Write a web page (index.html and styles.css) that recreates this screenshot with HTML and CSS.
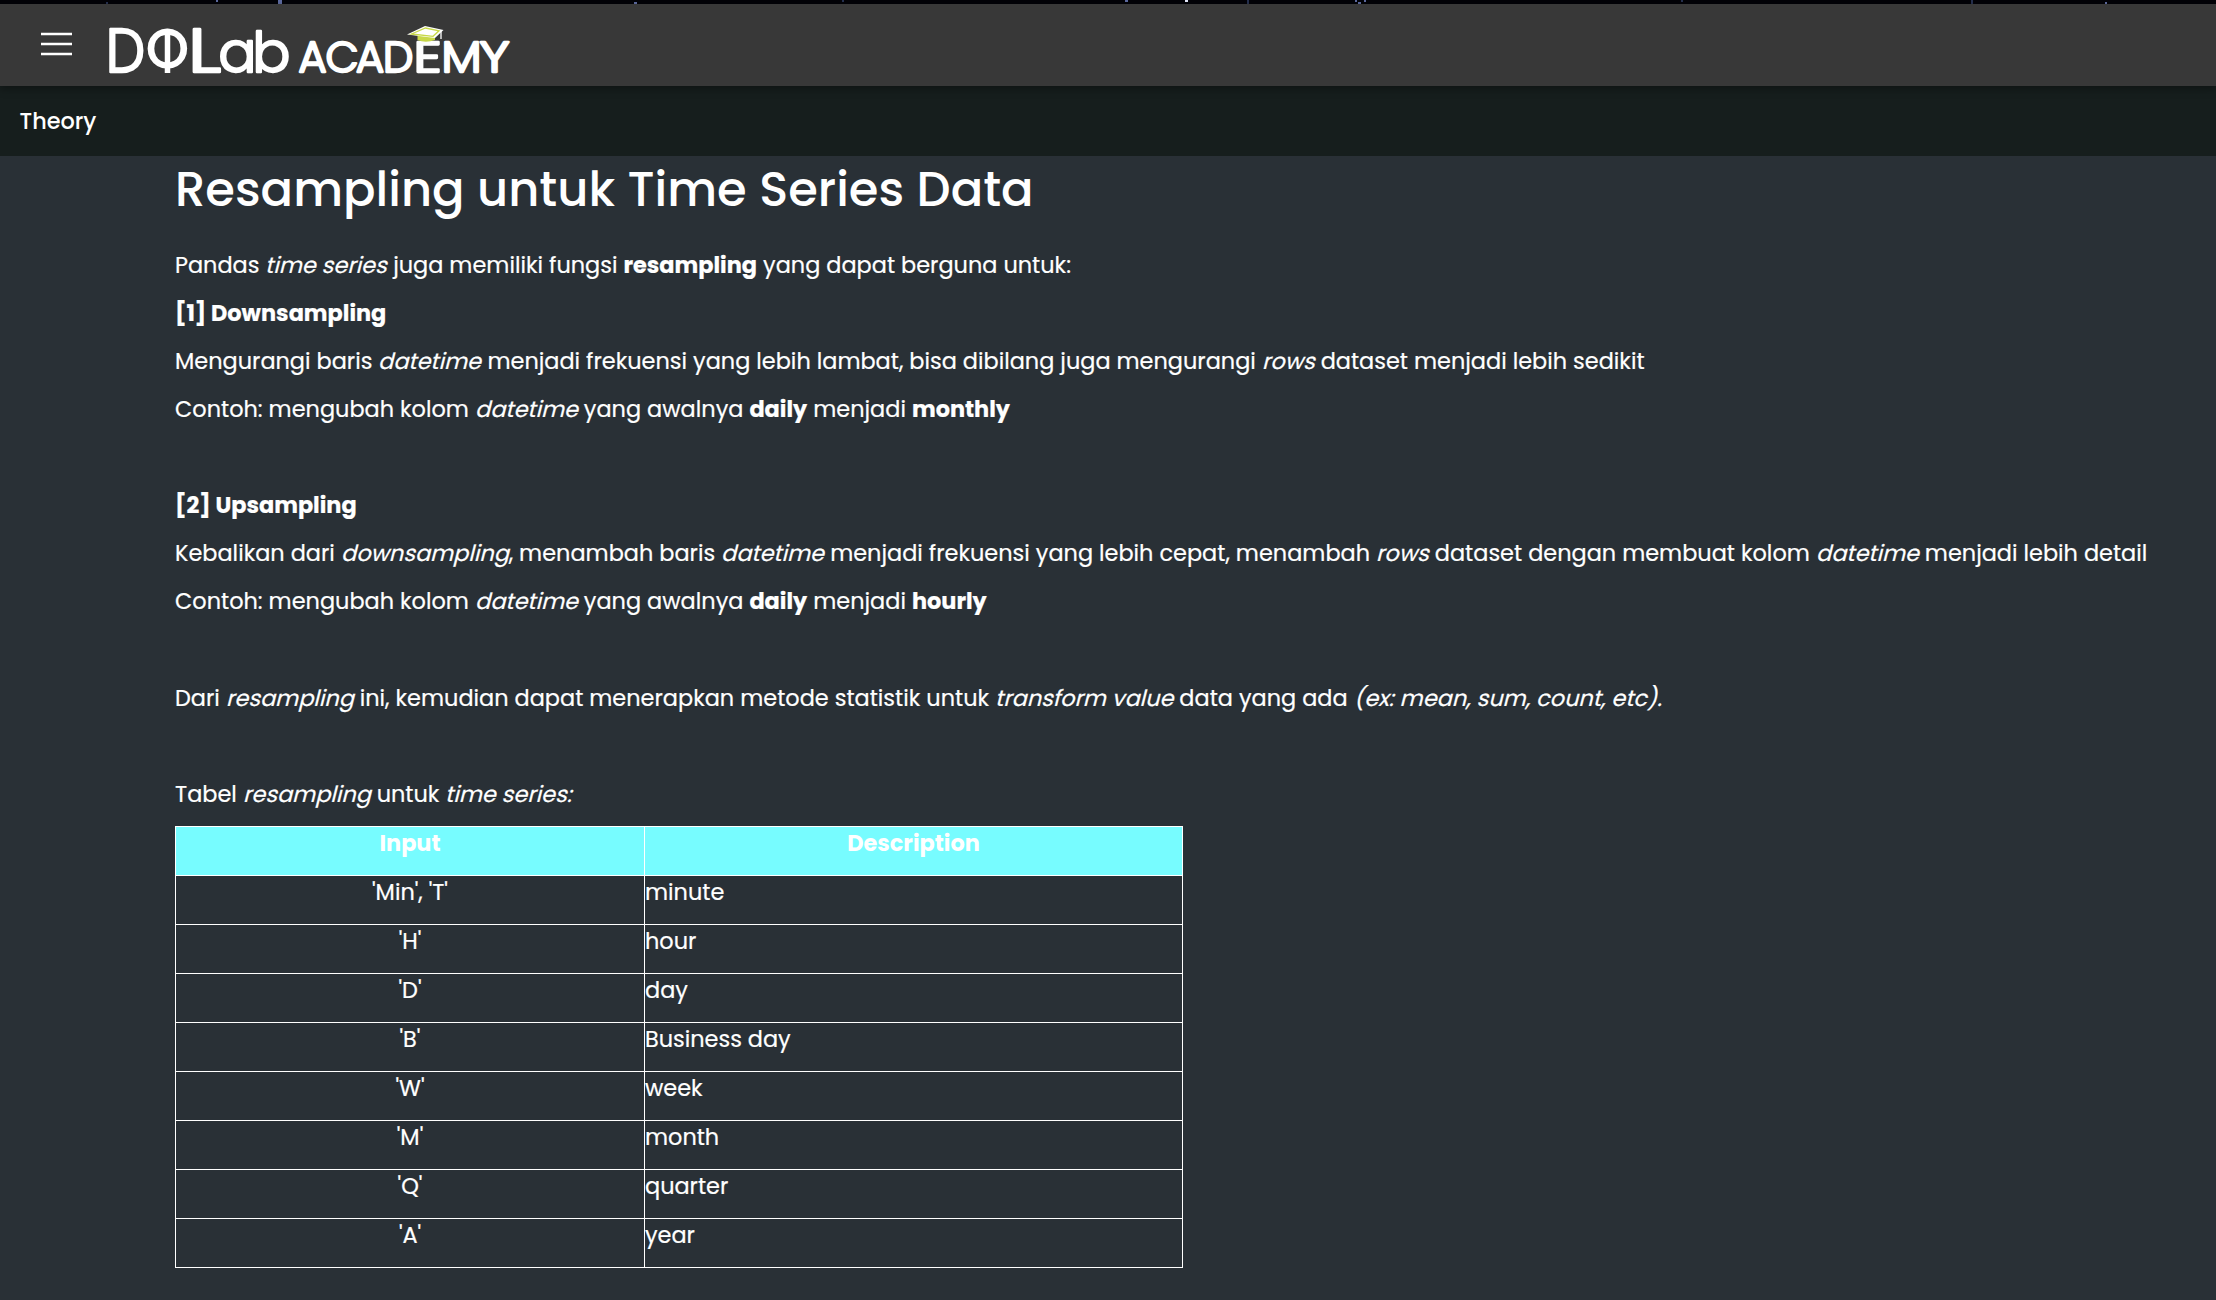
FILE: index.html
```html
<!DOCTYPE html>
<html lang="id">
<head>
<meta charset="utf-8">
<title>DQLab Academy</title>
<link rel="stylesheet" href="styles.css">
</head>
<body>
<div class="backdrop">
<svg width="2216" height="4" viewBox="0 0 2216 4"><path class="star" d="M278 0h4v4h-4zM634 2h3v2h-3zM216 0h2v2h-2zM1125 0h3v2h-3zM1355 0h2v2h-2zM1358 2h3v2h-3zM1364 0h2v2h-2zM2105 2h2v2h-2z"/><path class="star-bright" d="M1185 0h3v2h-3z"/><path class="star-dim" d="M106 2h2v2h-2zM842 0h2v2h-2zM1247 0h2v4h-2zM1681 0h2v2h-2zM1971 0h2v4h-2z"/></svg>
</div>
<header class="topbar">
<svg class="menu" width="31" height="24" viewBox="0 0 31 24"><path d="M0 2h31M0 12h31M0 22h31"/></svg>
<svg class="logo" width="412" height="54" viewBox="101 24 412 54">
<g class="logo-big">
<text x="106" y="71.700" textLength="39" lengthAdjust="spacingAndGlyphs">D</text>
<text class="logo-ring" x="167.500" y="66.500" text-anchor="middle">O</text>
<text x="188" y="71.700" textLength="33" lengthAdjust="spacingAndGlyphs">L</text>
</g>
<text class="logo-lower" x="218.500 252.500" y="71.700">ab</text>
<path class="bar" d="M167.500 29v44"/>
<g class="logo-small">
<text x="298.500 325.500 356 383" y="71.700">ACAD</text>
<text x="413.500" y="71.700" textLength="28" lengthAdjust="spacingAndGlyphs">E</text>
<text x="441.500" y="71.700" textLength="40" lengthAdjust="spacingAndGlyphs">M</text>
<text x="479.500" y="71.700" textLength="30" lengthAdjust="spacingAndGlyphs">Y</text>
</g>
<path class="cap-base" d="M417.500 35v5q8 3.500 17.500 0v-5z"/>
<path class="cap-top" d="M407 34.500L425 26L443.500 30L435 38Z"/>
<path class="cap-line" d="M411.500 34L425.500 28L439 30.800L433 36.300Z"/>
<path class="tassel" d="M441 31v8"/>
</svg>
</header>
<nav class="subbar">Theory</nav>
<main class="content">
<h1>Resampling untuk Time Series Data</h1>
<p>Pandas <em>time series</em> juga memiliki fungsi <strong>resampling</strong> yang dapat berguna untuk:</p>
<p><strong>[1] Downsampling</strong></p>
<p>Mengurangi baris <em>datetime</em> menjadi frekuensi yang lebih lambat, bisa dibilang juga mengurangi <em>rows</em> dataset menjadi lebih sedikit</p>
<p>Contoh: mengubah kolom <em>datetime</em> yang awalnya <strong>daily</strong> menjadi <strong>monthly</strong></p>
<p></p>
<p><strong>[2] Upsampling</strong></p>
<p>Kebalikan dari <em>downsampling</em>, menambah baris <em>datetime</em> menjadi frekuensi yang lebih cepat, menambah <em>rows</em> dataset dengan membuat kolom <em>datetime</em> menjadi lebih detail</p>
<p>Contoh: mengubah kolom <em>datetime</em> yang awalnya <strong>daily</strong> menjadi <strong>hourly</strong></p>
<p class="tall"></p>
<p>Dari <em>resampling</em> ini, kemudian dapat menerapkan metode statistik untuk <em>transform value</em> data yang ada <em>(ex: mean, sum, count, etc).</em></p>
<p></p>
<p>Tabel <em>resampling</em> untuk <em>time series:</em></p>
<table>
<thead><tr><th>Input</th><th>Description</th></tr></thead>
<tbody>
<tr><td>'Min', 'T'</td><td>minute</td></tr>
<tr><td>'H'</td><td>hour</td></tr>
<tr><td>'D'</td><td>day</td></tr>
<tr><td>'B'</td><td>Business day</td></tr>
<tr><td>'W'</td><td>week</td></tr>
<tr><td>'M'</td><td>month</td></tr>
<tr><td>'Q'</td><td>quarter</td></tr>
<tr><td>'A'</td><td>year</td></tr>
</tbody>
</table>
</main>
</body>
</html>
```
FILE: styles.css
```css
* { box-sizing: border-box; }
body {
  margin: 0;
  height: 1300px;
  overflow: hidden;
  background: #293036;
  color: #fff;
  font-family: Poppins, Inter, sans-serif;
  font-size: 22.4px;
  line-height: 36px;
}
.backdrop { height: 4px; background: #020207; }
.backdrop svg { display: block; }
.star { fill: #5d6ba0; }
.star-bright { fill: #e8ecff; }
.star-dim { fill: #25304f; }
.topbar {
  position: relative;
  display: flex;
  align-items: flex-start;
  height: 82px;
  padding: 20px 0 0 41px;
  gap: 29px;
  background: #383838;
  box-shadow: 0 3px 8px rgba(0, 0, 0, .35);
}
.menu { margin-top: 8px; }
.menu path { stroke: #fff; stroke-width: 2.5; }
.logo { overflow: visible; }
.logo text { fill: #fff; stroke: #fff; stroke-linejoin: round; font-weight: 300; }
.logo-big { font-size: 61px; }
.logo-big text { stroke-width: 2.5; }
.logo-big .logo-ring { font-size: 53px; stroke-width: 2.8; }
.logo .logo-lower { font-size: 56px; stroke-width: 2.4; }
.logo-small { font-size: 43px; }
.logo-small text { stroke-width: 2.3; }
.bar { stroke: #fff; stroke-width: 5.5; }
.cap-base { fill: #c8d849; }
.cap-top { fill: #fff; }
.cap-line { fill: none; stroke: #c8d849; stroke-width: 1.3; }
.tassel { stroke: #fff; stroke-width: 1.3; }
.subbar {
  height: 70px;
  padding: 17px 19.5px;
  background: #161e1d;
  font-weight: 500;
}
.content { padding: 1px 0 0 175px; }
h1 { margin: 0; height: 90px; font-size: 48px; line-height: 65px; font-weight: 500; white-space: nowrap; }
p { margin: 0; height: 48px; white-space: nowrap; letter-spacing: .012px; }
p, td { -webkit-text-stroke: .2px #fff; }
.tall { height: 49px; }
em {
  display: inline-block;
  font-style: normal;
  transform: skewX(-14deg);
  transform-origin: 0 72%;
}
strong, th { font-weight: 700; }
table { width: 1008px; margin-top: 2px; border-collapse: collapse; table-layout: fixed; line-height: 32px; }
th, td { height: 49px; padding: 0; border: 1px solid #fff; vertical-align: top; text-align: center; }
th { background: #77fcff; }
th:first-child { width: 469px; }
td:last-child { text-align: left; }
```
